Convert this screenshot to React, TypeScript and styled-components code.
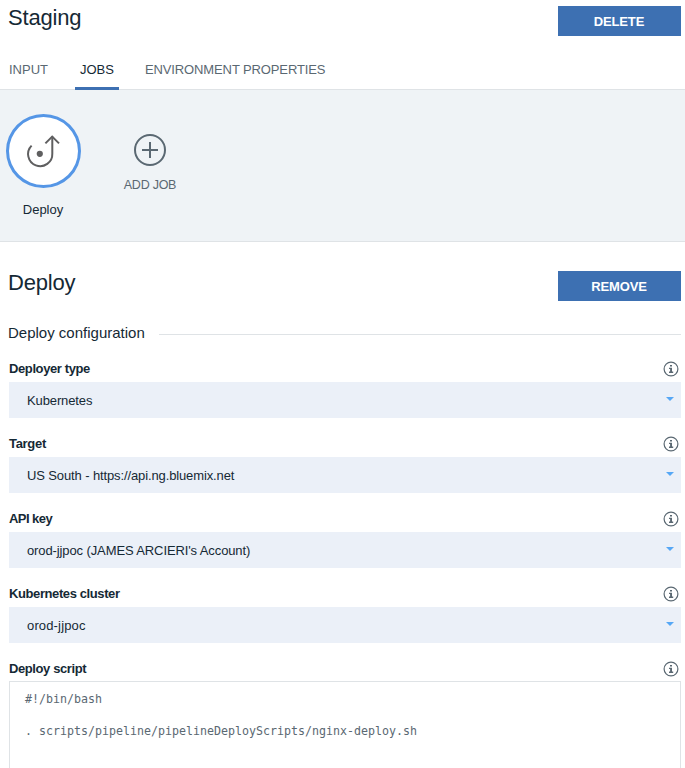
import React from "react";
import styled, { createGlobalStyle } from "styled-components";

const GlobalStyle = createGlobalStyle`
  * { box-sizing: border-box; }
  html, body { margin: 0; background: #fff; }
  body {
    height: 768px;
    overflow: hidden;
    font-family: "Liberation Sans", Arial, sans-serif;
    font-size: 13px;
    color: #152935;
  }
`;

const Page = styled.main`
  display: flex;
  flex-direction: column;
  height: 768px;
  overflow: hidden;
  & > * { flex-shrink: 0; }
`;

const StageHeader = styled.header`
  display: flex;
  justify-content: space-between;
  height: 50px;
  padding: 6px 4px 0 8px;
`;

const Title = styled.h1<{ $spacing?: number }>`
  margin: 0;
  font-size: 22px;
  font-weight: 400;
  line-height: 24px;
  white-space: nowrap;
  letter-spacing: ${(p) => p.$spacing ?? 0}px;
`;

const ActionButton = styled.button<{ $spacing: number }>`
  width: 123px;
  height: 30px;
  padding: 1px 1px 0 0;
  border: 0;
  background: #3d70b2;
  color: #fff;
  font: 700 13px/29px "Liberation Sans", Arial, sans-serif;
  letter-spacing: ${(p) => p.$spacing}px;
`;

const Tabs = styled.nav`
  display: flex;
  gap: 22px;
  height: 40px;
  padding-left: 4px;
  border-bottom: 1px solid #dfe3e6;
`;

const Tab = styled.a<{ $active?: boolean; $spacing?: number }>`
  height: 40px;
  padding: 0 5px;
  line-height: 39px;
  white-space: nowrap;
  letter-spacing: ${(p) => p.$spacing ?? 0}px;
  color: ${(p) => (p.$active ? "#152935" : "#5a6872")};
  border-bottom: 3px solid ${(p) => (p.$active ? "#3d70b2" : "transparent")};
  &:last-child { margin-left: -1px; }
`;

const JobStrip = styled.section`
  display: flex;
  height: 152px;
  padding: 24px 0 0 6px;
  background: #eff3f6;
  border-bottom: 1px solid #dfe3e6;
`;

const Job = styled.div`
  display: flex;
  flex-direction: column;
  align-items: center;
  width: 75px;
`;

const JobCircle = styled.div`
  display: flex;
  width: 75px;
  height: 74px;
  border: 3px solid #5596e6;
  border-radius: 50%;
  background: #fff;
`;

const JobName = styled.span`
  margin-top: 14px;
  line-height: 16px;
  padding-right: 1px;
`;

const AddJob = styled.div`
  display: flex;
  flex-direction: column;
  align-items: center;
  width: 60px;
  margin-left: 39px;
  padding-top: 20px;
  color: #5a6872;
`;

const AddLabel = styled.span`
  margin-top: 11px;
  font-size: 12.5px;
  line-height: 16px;
  letter-spacing: -0.25px;
  white-space: nowrap;
`;

const JobHeader = styled.header`
  display: flex;
  justify-content: space-between;
  height: 81px;
  padding: 29px 4px 0 8px;
`;

const SectionHeading = styled.h2`
  display: flex;
  align-items: center;
  gap: 14px;
  height: 20px;
  margin: 0 4px 0 8px;
  font-size: 15px;
  font-weight: 400;
  line-height: 20px;
  &::after {
    content: "";
    flex: 1;
    height: 1px;
    margin-top: 2px;
    background: #dfe3e6;
  }
`;

const Fields = styled.form`
  display: flex;
  flex-direction: column;
  gap: 16px;
  padding: 16px 4px 0 9px;
`;

const Field = styled.div`
  display: flex;
  flex-direction: column;
`;

const FieldHeader = styled.div`
  display: flex;
  justify-content: space-between;
  height: 23px;
  padding-right: 2px;
`;

const Label = styled.label<{ $spacing: number }>`
  font-weight: 700;
  line-height: 20px;
  letter-spacing: ${(p) => p.$spacing}px;
`;

const SelectBox = styled.div<{ $spacing: number }>`
  display: flex;
  align-items: center;
  justify-content: space-between;
  height: 36px;
  padding: 1px 7px 0 18px;
  background: #ebf0f8;
  letter-spacing: ${(p) => p.$spacing}px;
`;

const Caret = styled.svg`
  width: 8px;
  height: 4px;
  margin-top: -3px;
  fill: #56a7f5;
`;

const InfoSvg = styled.svg`
  width: 16px;
  height: 16px;
  margin-top: 1.5px;
`;

const Script = styled.pre`
  height: 100px;
  margin: -1px 0 0;
  padding: 9px 15px;
  border: 1px solid #dfe3e6;
  color: #5a6872;
  font: 11.63px/16px "DejaVu Sans Mono", monospace;
`;

const InfoIcon = () => (
  <InfoSvg viewBox="0 0 16 16" fill="none">
    <circle cx="8" cy="8" r="6.9" stroke="#5a6872" strokeWidth="1.2" />
    <path d="M7 4h2v1.6H7zM6 6.7h3v3.9h1.2V12H6v-1.4h1.1V8H6z" fill="#5a6872" />
  </InfoSvg>
);

const DeployIcon = () => (
  <svg width="69" height="68" viewBox="0 0 69 68" fill="none" stroke="#5f5f60" strokeWidth="2">
    <path d="M22.6 28.6A12.1 12.1 0 1 0 43.3 36.6V19.5" />
    <path d="M36.4 26.4L43.2 19.6L50 26.4" />
    <circle cx="30.8" cy="36.8" r="3.1" fill="#5f5f60" stroke="none" />
  </svg>
);

const AddIcon = () => (
  <svg width="32" height="32" viewBox="0 0 32 32" fill="none" stroke="#5a6872" strokeWidth="2">
    <circle cx="16" cy="16" r="15" />
    <path d="M8 16h16M16 8v16" />
  </svg>
);

const fields = [
  { label: "Deployer type", labelSpacing: -0.39, value: "Kubernetes", spacing: -0.12 },
  { label: "Target", labelSpacing: -0.3, value: "US South - https://api.ng.bluemix.net", spacing: -0.12 },
  { label: "API key", labelSpacing: -0.55, value: "orod-jjpoc (JAMES ARCIERI's Account)", spacing: -0.11 },
  { label: "Kubernetes cluster", labelSpacing: -0.4, value: "orod-jjpoc", spacing: 0.15 },
];

export default function App() {
  return (
    <>
      <GlobalStyle />
      <Page>
        <StageHeader>
          <Title $spacing={-0.2}>Staging</Title>
          <ActionButton $spacing={-0.15}>DELETE</ActionButton>
        </StageHeader>
        <Tabs>
          <Tab>INPUT</Tab>
          <Tab $active>JOBS</Tab>
          <Tab $spacing={-0.12}>ENVIRONMENT PROPERTIES</Tab>
        </Tabs>
        <JobStrip>
          <Job>
            <JobCircle><DeployIcon /></JobCircle>
            <JobName>Deploy</JobName>
          </Job>
          <AddJob>
            <AddIcon />
            <AddLabel>ADD JOB</AddLabel>
          </AddJob>
        </JobStrip>
        <JobHeader>
          <Title $spacing={-0.2}>Deploy</Title>
          <ActionButton $spacing={-0.1}>REMOVE</ActionButton>
        </JobHeader>
        <SectionHeading>Deploy configuration</SectionHeading>
        <Fields>
          {fields.map((f) => (
            <Field key={f.label}>
              <FieldHeader>
                <Label $spacing={f.labelSpacing}>{f.label}</Label>
                <InfoIcon />
              </FieldHeader>
              <SelectBox $spacing={f.spacing}>
                {f.value}
                <Caret viewBox="0 0 8 4"><path d="M0 0h8L4 4z" /></Caret>
              </SelectBox>
            </Field>
          ))}
          <Field>
            <FieldHeader>
              <Label $spacing={-0.4}>Deploy script</Label>
              <InfoIcon />
            </FieldHeader>
            <Script>{"#!/bin/bash\n\n. scripts/pipeline/pipelineDeployScripts/nginx-deploy.sh"}</Script>
          </Field>
        </Fields>
      </Page>
    </>
  );
}
